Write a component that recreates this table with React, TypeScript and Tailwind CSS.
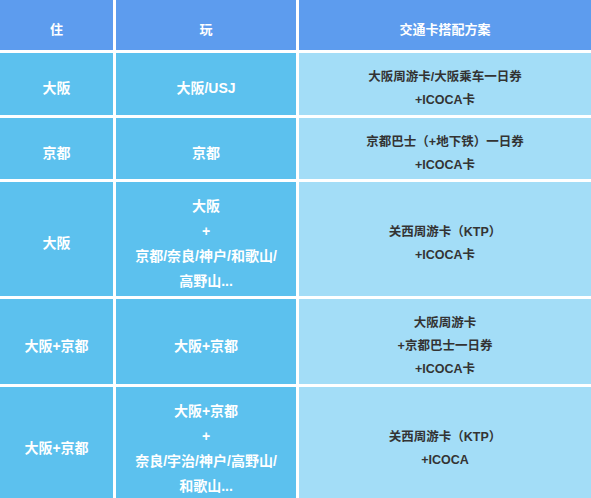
const ROWS = [
  { live: ["大阪"], play: ["大阪/USJ"], pass: ["大阪周游卡/大阪乘车一日券", "+ICOCA卡"] },
  { live: ["京都"], play: ["京都"], pass: ["京都巴士（+地下铁）一日券", "+ICOCA卡"] },
  { live: ["大阪"], play: ["大阪", "+", "京都/奈良/神户/和歌山/", "高野山..."], pass: ["关西周游卡（KTP）", "+ICOCA卡"] },
  { live: ["大阪+京都"], play: ["大阪+京都"], pass: ["大阪周游卡", "+京都巴士一日券", "+ICOCA卡"] },
  { live: ["大阪+京都"], play: ["大阪+京都", "+", "奈良/宇治/神户/高野山/", "和歌山..."], pass: ["关西周游卡（KTP）", "+ICOCA"] },
];

function Cell({ lines, tone }: { lines: string[]; tone: "mid" | "light" }) {
  return (
    <div
      className={
        tone === "mid"
          ? "flex flex-col items-center justify-center pt-[9px] text-center text-[14px] leading-[25px] text-white bg-[#5cc1ee]"
          : "flex flex-col items-center justify-center pt-[10px] text-center text-[12.5px] leading-[23px] text-[#333333] bg-[#a3ddf7]"
      }
    >
      {lines.map((l, i) => (
        <div key={i}>{l}</div>
      ))}
    </div>
  );
}

export default function App() {
  return (
    <div
      className="h-[498px] w-[591px] overflow-hidden bg-white text-[13px] font-semibold"
      style={{ fontFamily: '"Liberation Sans", "Noto Sans CJK SC", sans-serif' }}
    >
      <div className="grid grid-cols-[113px_180px_1fr] grid-rows-[50px_62px_61px_114px_85px_114px] gap-[3px]">
        {["住", "玩", "交通卡搭配方案"].map((h) => (
          <div key={h} className="flex items-center justify-center pt-[9px] text-white bg-[#5d9cee]">
            {h}
          </div>
        ))}
        {ROWS.map((r, i) => (
          <div key={i} className="contents">
            <Cell lines={r.live} tone="mid" />
            <Cell lines={r.play} tone="mid" />
            <Cell lines={r.pass} tone="light" />
          </div>
        ))}
      </div>
    </div>
  );
}
